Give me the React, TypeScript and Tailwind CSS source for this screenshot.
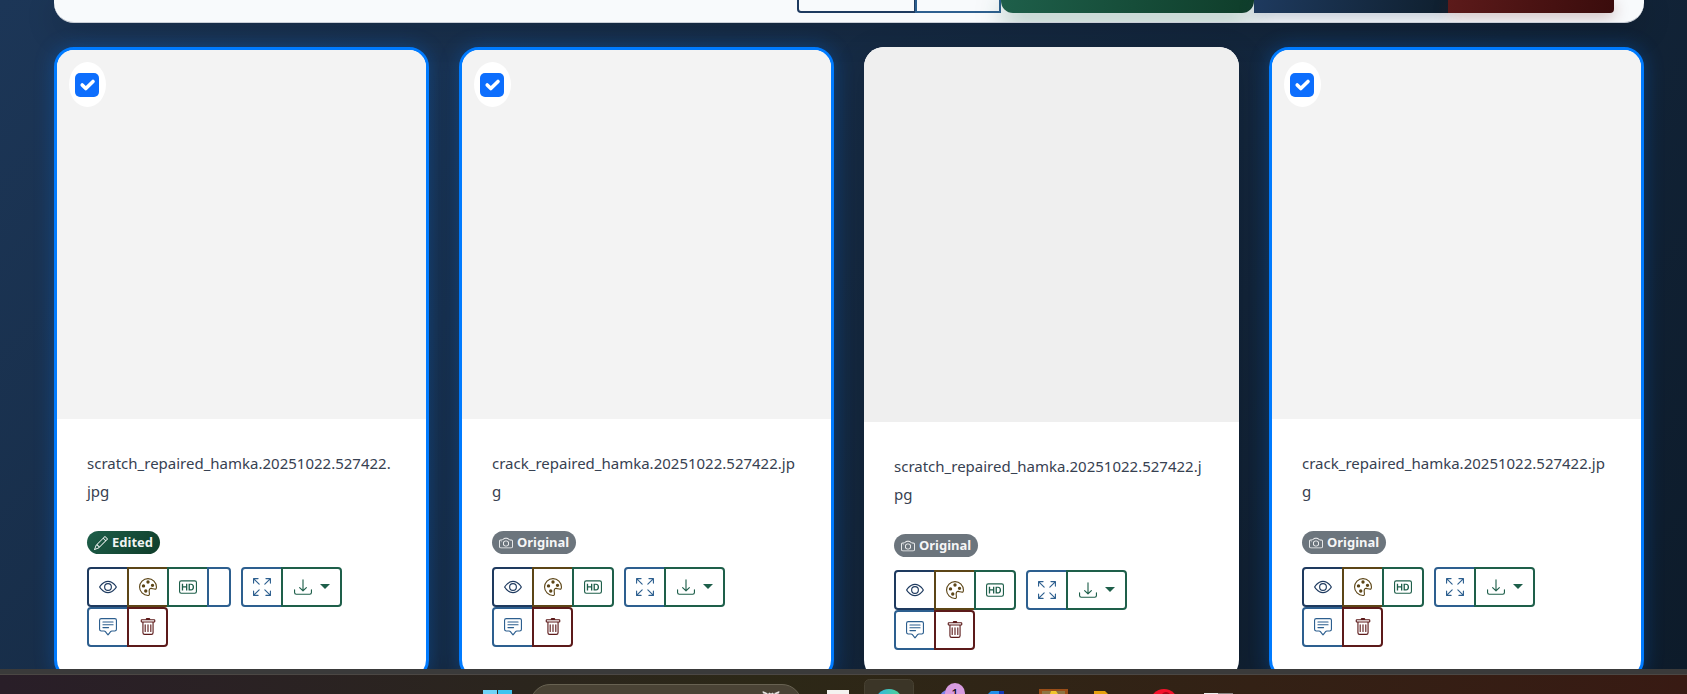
import React from "react";
import {
  BsArrowsFullscreen,
  BsBadgeHd,
  BsCamera,
  BsChatSquareText,
  BsDownload,
  BsEye,
  BsPalette,
  BsPencil,
  BsTrash,
} from "react-icons/bs";

type Photo = { id: number; name: string; edited: boolean; selected: boolean };

const photos: Photo[] = [
  { id: 1, name: "scratch_repaired_hamka.20251022.527422.jpg", edited: true, selected: true },
  { id: 2, name: "crack_repaired_hamka.20251022.527422.jpg", edited: false, selected: true },
  { id: 3, name: "scratch_repaired_hamka.20251022.527422.jpg", edited: false, selected: false },
  { id: 4, name: "crack_repaired_hamka.20251022.527422.jpg", edited: false, selected: true },
];

const base = "flex h-10 items-center justify-center border-2 text-[18px]";

function ActionButton({ label, look, children }: { label: string; look: string; children?: React.ReactNode }) {
  return (
    <button type="button" aria-label={label} className={`${base} ${look}`}>
      {children}
    </button>
  );
}

function Actions({ edited }: { edited: boolean }) {
  return (
    <div className="mt-[13px] flex flex-wrap gap-x-2.5">
      <div className="flex -space-x-0.5">
        <ActionButton label="View" look="w-[42px] rounded-l border-[#1e3a5f] text-[#1e3a5f]">
          <BsEye />
        </ActionButton>
        <ActionButton label="Colorize" look="w-[42px] border-[#5c4516] text-[#5c4516]">
          <BsPalette />
        </ActionButton>
        <ActionButton
          label="Enhance to HD"
          look={edited ? "w-[42px] border-[#1e5f4a] text-[#1e5f4a]" : "w-[42px] rounded-r border-[#1e5f4a] text-[#1e5f4a]"}
        >
          <BsBadgeHd />
        </ActionButton>
        {edited && <ActionButton label="Compare" look="w-6 rounded-r border-[#2d5f8f] text-[#2d5f8f]" />}
      </div>
      <div className="flex -space-x-0.5">
        <ActionButton label="Full screen" look="w-[42px] rounded-l border-[#2d5f8f] text-[#2d5f8f]">
          <BsArrowsFullscreen />
        </ActionButton>
        <ActionButton label="Download" look="w-[61px] gap-2 rounded-r border-[#1e5f4a] text-[#1e5f4a]">
          <BsDownload />
          <svg viewBox="0 0 10 5" className="mb-0.5 h-[5px] w-2.5" fill="currentColor">
            <path d="M0 0h10L5 5z" />
          </svg>
        </ActionButton>
      </div>
      <div className="flex -space-x-0.5">
        <ActionButton label="Comment" look="w-[42px] rounded-l border-[#2d5f8f] text-[#2d5f8f]">
          <BsChatSquareText />
        </ActionButton>
        <ActionButton label="Delete" look="w-[41px] rounded-r border-[#5c1a1a] text-[#5c1a1a]">
          <BsTrash />
        </ActionButton>
      </div>
    </div>
  );
}

function Card({ photo }: { photo: Photo }) {
  const frame = photo.selected
    ? "border-[3px] border-[#007bff] shadow-[0_0_20px_rgba(0,123,255,0.3)]"
    : "shadow-[0_8px_32px_rgba(0,0,0,0.15)]";
  return (
    <article className={`relative overflow-hidden rounded-[20px] bg-white ${frame}`}>
      <div className={photo.selected ? "aspect-square bg-[#f3f3f3]" : "aspect-square bg-[#efefef]"} />
      {photo.selected && (
        <label className="absolute top-3 left-3 flex h-[45px] w-[37px] rounded-[50%] bg-white px-1.5 pt-[11px]">
          <span className="relative block size-6">
            <input
              type="checkbox"
              defaultChecked
              aria-label={`Select ${photo.name}`}
              className="block size-6 appearance-none rounded-[5px] bg-[#0d6efd]"
            />
            <svg viewBox="0 0 20 20" className="pointer-events-none absolute inset-0 size-6" fill="none">
              <path d="m6 10 3 3 6-6" stroke="#fff" strokeWidth="3" strokeLinecap="round" strokeLinejoin="round" />
            </svg>
          </span>
        </label>
      )}
      <div className="p-[30px]">
        <h3 className="pr-0.5 text-[15px] leading-7 break-all text-[#374151]">{photo.name}</h3>
        <span
          className={
            photo.edited
              ? "mt-[26px] flex h-[23px] w-fit items-center gap-1 rounded-full bg-linear-135 from-[#1e5f4a] to-[#0f3d2a] px-[7px] text-[13px] font-bold text-white/95"
              : "mt-[26px] flex h-[23px] w-fit items-center gap-1 rounded-full bg-[#6c757d] px-[7px] text-[13px] font-bold text-white/95"
          }
        >
          {photo.edited ? <BsPencil className="size-3.5" /> : <BsCamera className="size-3.5" />}
          {photo.edited ? "Edited" : "Original"}
        </span>
        <Actions edited={photo.edited} />
      </div>
    </article>
  );
}

function Toolbar() {
  return (
    <header className="flex h-[23px] shrink-0 items-start justify-end rounded-b-[20px] border-b border-[#c9ced6] bg-[#f8fafc] pr-[30px] shadow-[0_8px_32px_rgba(0,0,0,0.2)] overflow-hidden">
      <button type="button" aria-label="Select all" className="h-[13px] w-[119px] rounded-bl border-2 border-t-0 border-[#1e3a5f]" />
      <button type="button" aria-label="Clear" className="-ml-px h-[13px] w-[86px] border-2 border-t-0 border-[#2d5f8f]" />
      <button
        type="button"
        aria-label="Download selected"
        className="h-[13px] w-[253px] rounded-b-xl bg-linear-100 from-[#1e5f4a] to-[#0f3d2a] shadow-[0_8px_25px_rgba(30,95,74,0.5)]"
      />
      <button
        type="button"
        aria-label="Share selected"
        className="h-[13px] w-[194px] bg-linear-100 from-[#1e3a5f] to-[#0f1f2e] shadow-[0_4px_15px_rgba(30,58,95,0.3)]"
      />
      <button
        type="button"
        aria-label="Delete selected"
        className="h-[13px] w-[166px] rounded-br bg-linear-100 from-[#5c1a1a] to-[#3a0c0c] shadow-[0_4px_15px_rgba(92,26,26,0.3)]"
      />
    </header>
  );
}

const slot = "relative flex h-[19px] w-[55px] shrink-0 overflow-hidden";

function Taskbar() {
  return (
    <footer className="h-[25px] shrink-0 overflow-hidden bg-linear-to-r from-[#291e28] via-[#2c2817] via-45% to-[#381a13]">
      <div className="h-[6px] border-b border-[#4b4744] bg-[#3a3a3a]" />
      <div className="flex h-[19px] items-start pl-[483px]">
        <svg viewBox="0 0 29 19" className="h-[19px] w-[29px] shrink-0">
          <path d="M0 15h14v4H0z" fill="#6fd3f7" />
          <path d="M15 15h14v4H15z" fill="#3fc4f0" />
        </svg>
        <div className="mt-[9px] ml-[18px] flex h-10 w-[272px] shrink-0 justify-end rounded-full border border-[#686252] bg-[#4a4335] pr-5">
          <svg viewBox="0 0 20 10" className="mt-[6px] h-2.5 w-5">
            <path d="M1 0l5 2h7l6-2-2 5v5H3V5z" fill="#8d8a88" />
            <path d="M2 1l4 2M18 1l-4 2M8 2l2 2 2-2" fill="none" stroke="#e8e4e0" strokeWidth="1.5" />
          </svg>
        </div>
        <div className={`${slot} ml-[5px]`}>
          <svg viewBox="0 0 55 19" className="h-[19px] w-[55px]">
            <path d="M20 15h22v4H20z" fill="#f4f2f0" />
          </svg>
        </div>
        <div className={slot}>
          <svg viewBox="0 0 55 19" className="h-[19px] w-[55px]">
            <defs>
              <linearGradient id="edge" x1="0" x2="1">
                <stop offset="0" stopColor="#2db3e8" />
                <stop offset="1" stopColor="#55d68c" />
              </linearGradient>
            </defs>
            <rect x="2.5" y="4.500" width="49" height="40" rx="5" fill="#3b3527" stroke="#474132" />
            <circle cx="27" cy="28" r="14" fill="url(#edge)" />
          </svg>
        </div>
        <div className={slot}>
          <svg viewBox="0 0 55 19" className="h-[19px] w-[55px]">
            <circle cx="31" cy="23" r="8" fill="#7b83eb" />
          </svg>
          <span className="absolute top-2 left-7 size-5 rounded-full bg-[#d79be0] text-center text-[13px] leading-5 text-black">1</span>
        </div>
        <div className={slot}>
          <svg viewBox="0 0 55 19" className="h-[19px] w-[55px]">
            <path d="M16 19l3-3h8v3z" fill="#1f8fe8" />
            <path d="M27 16h5v3h-5z" fill="#1238b8" />
          </svg>
        </div>
        <div className={slot}>
          <svg viewBox="0 0 55 19" className="h-[19px] w-[55px]">
            <path d="M12 14h29v5H12z" fill="#9a4e18" />
            <path d="M15 16h23v3H15z" fill="#8d7544" />
            <path d="M24 16h5l2 3h-8z" fill="#f2c52b" />
          </svg>
        </div>
        <div className={slot}>
          <svg viewBox="0 0 55 19" className="h-[19px] w-[55px]">
            <path d="M12 16h11l3 3H12z" fill="#e5a00d" />
          </svg>
        </div>
        <div className={slot}>
          <svg viewBox="0 0 55 19" className="h-[19px] w-[55px]">
            <circle cx="27" cy="28" r="14" fill="#f5122b" />
            <ellipse cx="29" cy="28" rx="7" ry="11" fill="#a80718" />
          </svg>
        </div>
        <div className={slot}>
          <svg viewBox="0 0 55 19" className="h-[19px] w-[55px]">
            <path d="M12 18h14v1H12z" fill="#eeeeee" />
            <path d="M26 18h15v1H26z" fill="#8c8583" />
          </svg>
        </div>
      </div>
    </footer>
  );
}

export default function App() {
  return (
    <div className="flex h-screen flex-col overflow-hidden font-['Noto_Sans','Open_Sans',sans-serif]">
      <main className="min-h-0 flex-1 overflow-hidden bg-linear-135 from-[#1c3657] to-[#0d1b2a] pr-[43px] pl-[54px]">
        <Toolbar />
        <section className="mt-6 grid grid-cols-4 gap-[30px]">
          {photos.map((photo) => (
            <Card key={photo.id} photo={photo} />
          ))}
        </section>
      </main>
      <Taskbar />
    </div>
  );
}
